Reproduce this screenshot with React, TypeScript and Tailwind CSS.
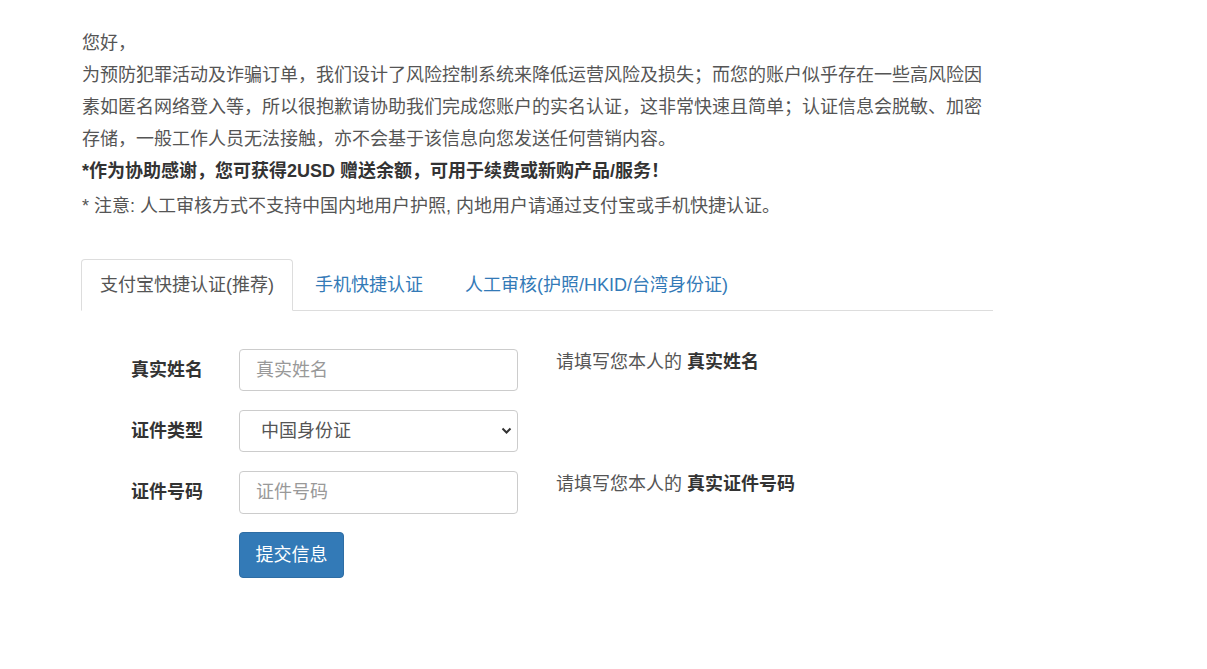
import { useState } from 'react';

const font = { fontFamily: '"Liberation Sans", "Noto Sans CJK SC", sans-serif' };

const tabs = ['支付宝快捷认证(推荐)', '手机快捷认证', '人工审核(护照/HKID/台湾身份证)'];

export default function App() {
  const [active, setActive] = useState(0);
  const [name, setName] = useState('');
  const [idType, setIdType] = useState('cn');
  const [idNo, setIdNo] = useState('');

  return (
    <div className="min-h-[669px] bg-white text-[18px] text-[#555]" style={font}>
      <div className="ml-[82px] w-[911px] pt-[27px]">
        <div className="leading-[32px]">
          <p>您好，</p>
          <p>
            为预防犯罪活动及诈骗订单，我们设计了风险控制系统来降低运营风险及损失；而您的账户似乎存在一些高风险因素如匿名网络登入等，所以很抱歉请协助我们完成您账户的实名认证，这非常快速且简单；认证信息会脱敏、加密存储，一般工作人员无法接触，亦不会基于该信息向您发送任何营销内容。
          </p>
          <p className="font-bold text-[#333]">*作为协助感谢，您可获得2USD 赠送余额，可用于续费或新购产品/服务！</p>
          <p className="mt-[3px]">* 注意: 人工审核方式不支持中国内地用户护照, 内地用户请通过支付宝或手机快捷认证。</p>
        </div>

        <div className="mt-[37px] flex border-b border-[#ddd]">
          {tabs.map((t, i) => (
            <button
              key={t}
              onClick={() => setActive(i)}
              className={
                i === active
                  ? '-mb-px -ml-px mr-[2px] rounded-t-[4px] border border-[#ddd] border-b-white bg-white px-[18px] py-3 leading-[26px] text-[#555]'
                  : '-mb-px mr-[2px] border border-transparent px-[19px] py-3 leading-[26px] text-[#337ab7]'
              }
            >
              {t}
            </button>
          ))}
        </div>

        <form className="mt-[38px]" onSubmit={e => e.preventDefault()}>
          <div className="mb-[19px] flex items-start">
            <label className="h-[42px] w-[121px] text-right font-bold leading-[42px] text-[#333]">真实姓名</label>
            <input
              value={name}
              onChange={e => setName(e.target.value)}
              placeholder="真实姓名"
              className="ml-[36px] h-[42px] w-[279px] rounded-[4px] border border-[#ccc] px-4 text-[#555] placeholder-[#999] outline-none"
            />
            <p className="ml-[38px] leading-[26px]">
              请填写您本人的 <b className="text-[#333]">真实姓名</b>
            </p>
          </div>

          <div className="mb-[19px] flex items-start">
            <label className="h-[42px] w-[121px] text-right font-bold leading-[42px] text-[#333]">证件类型</label>
            <div className="relative ml-[36px] h-[42px] w-[279px]">
              <select
                value={idType}
                onChange={e => setIdType(e.target.value)}
                className="h-full w-full appearance-none rounded-[4px] border border-[#ccc] bg-white pl-[21px] text-[#555] outline-none"
              >
                <option value="cn">中国身份证</option>
              </select>
              <svg className="pointer-events-none absolute right-[6px] top-[17px]" width="11" height="8" viewBox="0 0 11 8">
                <path d="M1.5 1.5 L5.5 5.5 L9.5 1.5" fill="none" stroke="#333" strokeWidth="2" />
              </svg>
            </div>
          </div>

          <div className="mb-[18px] flex items-start">
            <label className="h-[42px] w-[121px] text-right font-bold leading-[42px] text-[#333]">证件号码</label>
            <input
              value={idNo}
              onChange={e => setIdNo(e.target.value)}
              placeholder="证件号码"
              className="ml-[36px] h-[43px] w-[279px] rounded-[4px] border border-[#ccc] px-4 text-[#555] placeholder-[#999] outline-none"
            />
            <p className="ml-[38px] leading-[26px]">
              请填写您本人的 <b className="text-[#333]">真实证件号码</b>
            </p>
          </div>

          <div className="ml-[157px]">
            <button type="submit" className="h-[46px] w-[105px] rounded-[4px] border border-[#2e6da4] bg-[#337ab7] text-white">
              提交信息
            </button>
          </div>
        </form>
      </div>
    </div>
  );
}
